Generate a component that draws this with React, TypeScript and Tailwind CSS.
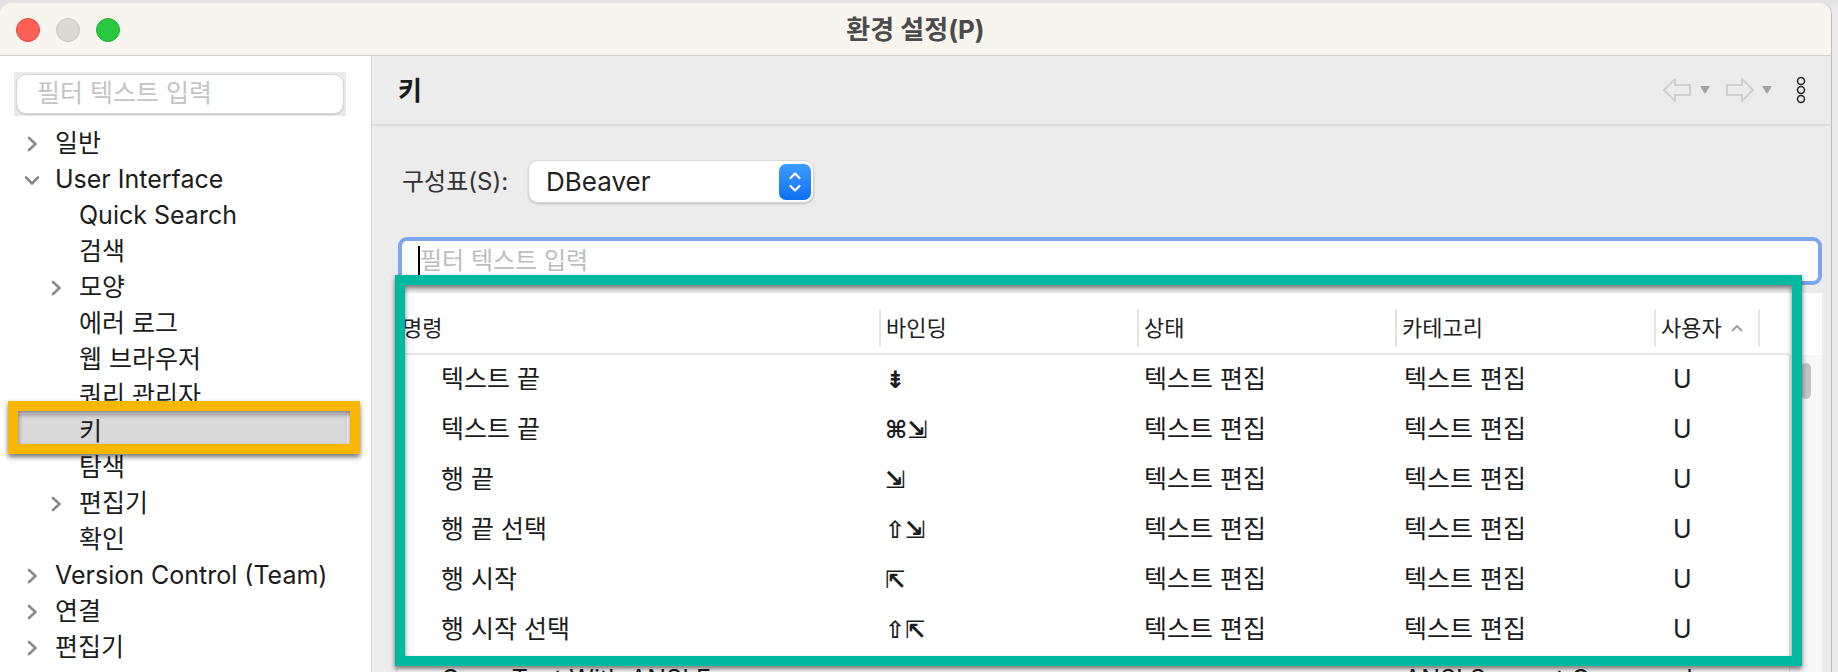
type TreeItem = { label: string; level: number; chev?: 'right' | 'down'; selected?: boolean };

const tree: TreeItem[] = [
  { label: '일반', level: 0, chev: 'right' },
  { label: 'User Interface', level: 0, chev: 'down' },
  { label: 'Quick Search', level: 1 },
  { label: '검색', level: 1 },
  { label: '모양', level: 1, chev: 'right' },
  { label: '에러 로그', level: 1 },
  { label: '웹 브라우저', level: 1 },
  { label: '쿼리 관리자', level: 1 },
  { label: '키', level: 1, selected: true },
  { label: '탐색', level: 1 },
  { label: '편집기', level: 1, chev: 'right' },
  { label: '확인', level: 1 },
  { label: 'Version Control (Team)', level: 0, chev: 'right' },
  { label: '연결', level: 0, chev: 'right' },
  { label: '편집기', level: 0, chev: 'right' },
];

const rows = [
  { cmd: '텍스트 끝', key: '⇟', when: '텍스트 편집', cat: '텍스트 편집', user: 'U' },
  { cmd: '텍스트 끝', key: '⌘⇲', when: '텍스트 편집', cat: '텍스트 편집', user: 'U' },
  { cmd: '행 끝', key: '⇲', when: '텍스트 편집', cat: '텍스트 편집', user: 'U' },
  { cmd: '행 끝 선택', key: '⇧⇲', when: '텍스트 편집', cat: '텍스트 편집', user: 'U' },
  { cmd: '행 시작', key: '⇱', when: '텍스트 편집', cat: '텍스트 편집', user: 'U' },
  { cmd: '행 시작 선택', key: '⇧⇱', when: '텍스트 편집', cat: '텍스트 편집', user: 'U' },
  { cmd: 'Open Text With ANSI Escapes', key: '', when: '', cat: 'ANSI Support Commands', user: '' },
];

function HollowArrow({ dir }: { dir: 'left' | 'right' }) {
  return (
    <svg width="30" height="26" viewBox="0 0 30 26" className={dir === 'right' ? '-scale-x-100' : ''}>
      <path d="M2 13 L13 2 L13 8 L28 8 L28 18 L13 18 L13 24 Z" fill="none" stroke="#cfcfcf" strokeWidth="2" strokeLinejoin="round" />
    </svg>
  );
}

function SmallTriangle() {
  return (
    <svg width="10" height="8" viewBox="0 0 10 8">
      <path d="M0 0 L10 0 L5 8 Z" fill="#a3a3a3" />
    </svg>
  );
}

function Chevron({ dir }: { dir: 'right' | 'down' }) {
  if (dir === 'right') {
    return (
      <svg width="11" height="16" viewBox="0 0 11 16">
        <path d="M2 2 L8.5 8 L2 14" fill="none" stroke="#8a8a8a" strokeWidth="2.6" strokeLinecap="round" strokeLinejoin="round" />
      </svg>
    );
  }
  return (
    <svg width="16" height="11" viewBox="0 0 16 11">
      <path d="M2 2.5 L8 8.5 L14 2.5" fill="none" stroke="#8a8a8a" strokeWidth="2.6" strokeLinecap="round" strokeLinejoin="round" />
    </svg>
  );
}

export default function App() {
  return (
    <div className="relative w-[1838px] h-[672px] overflow-hidden bg-[#e4e4e4] font-[Inter,'Noto_Sans_CJK_KR',sans-serif] text-[#1c1c1c]">
      <div className="flex h-full pt-[3px]">
        {/* window */}
        <div className="flex flex-col w-[1832px] h-full rounded-t-[12px] border-r border-[#bdbdbd] overflow-hidden bg-white">
          <div className="relative flex items-center justify-center h-[53px] shrink-0 bg-[#f8f4ee] border-b border-[#d3d0cb]">
            <div className="absolute left-[16px] top-[15px] flex gap-[16px]">
              <span className="w-[24px] h-[24px] rounded-full bg-[#fe5f57] border border-[#e1463f]" />
              <span className="w-[24px] h-[24px] rounded-full bg-[#dcd8d2] border border-[#c8c4be]" />
              <span className="w-[24px] h-[24px] rounded-full bg-[#28c840] border border-[#1fae33]" />
            </div>
            <span className="text-[26px] font-bold text-[#4b4b4b]">환경 설정(P)</span>
          </div>

          <div className="flex flex-1 min-h-0">
            {/* sidebar */}
            <div className="w-[372px] shrink-0 bg-white border-r border-[#d4d4d4]">
              <div className="ml-[14px] mt-[16px] w-[332px] bg-[#e9e9e9] p-[2px]">
                <div className="h-[40px] flex items-center pl-[20px] rounded-[10px] bg-white border border-[#d4d4d4] shadow-[0_1px_1px_rgba(0,0,0,0.15)] text-[25px] text-[#c4c4c4]">
                  필터 텍스트 입력
                </div>
              </div>
              <div className="mt-[10px]">
                {tree.map((t, i) => (
                  <div
                    key={i}
                    className={`flex items-center h-[36px] ml-[14px] mr-[24px] text-[25px] ${t.selected ? 'bg-[#dadada]' : ''}`}
                    style={{ paddingLeft: 8 + t.level * 24 }}
                  >
                    <span className="w-[20px] flex justify-center">
                      {t.chev && <Chevron dir={t.chev} />}
                    </span>
                    <span className="ml-[13px] whitespace-nowrap">{t.label}</span>
                  </div>
                ))}
              </div>
            </div>

            {/* right panel */}
            <div className="flex-1 flex flex-col bg-[#ececec] min-w-0">
              <div className="flex items-center h-[70px] shrink-0 pl-[26px] pr-[24px] border-b-2 border-[#dcdcdc]">
                <span className="text-[26px] font-bold text-[#1a1a1a]">키</span>
                <div className="ml-auto flex items-center">
                  <HollowArrow dir="left" />
                  <span className="ml-[8px]"><SmallTriangle /></span>
                  <span className="ml-[15px]"><HollowArrow dir="right" /></span>
                  <span className="ml-[7px]"><SmallTriangle /></span>
                  <svg width="12" height="28" viewBox="0 0 12 28" className="ml-[23px]">
                    <circle cx="6" cy="5" r="3.5" fill="none" stroke="#222" strokeWidth="1.5" />
                    <circle cx="6" cy="14" r="3.5" fill="none" stroke="#222" strokeWidth="1.5" />
                    <circle cx="6" cy="23" r="3.5" fill="none" stroke="#222" strokeWidth="1.5" />
                  </svg>
                </div>
              </div>

              <div className="flex flex-col pl-[26px] pr-[9px] min-h-0 flex-1">
                <div className="flex items-center mt-[34px] h-[43px]">
                  <span className="ml-[4px] text-[24px] text-[#333]">구성표(S):</span>
                  <div className="ml-[20px] w-[286px] h-[43px] flex items-center rounded-[10px] bg-white border border-[#d9d9d9] shadow-[0_1px_2px_rgba(0,0,0,0.2)]">
                    <span className="ml-[17px] text-[26px] text-[#222]">DBeaver</span>
                    <div className="ml-auto mr-[2px] w-[32px] h-[36px] rounded-[7px] bg-gradient-to-b from-[#3d9cff] to-[#0a70f0] flex items-center justify-center">
                      <svg width="14" height="24" viewBox="0 0 14 24">
                        <path d="M2.5 8 L7 3.5 L11.5 8" fill="none" stroke="white" strokeWidth="2.2" strokeLinecap="round" strokeLinejoin="round" />
                        <path d="M2.5 16 L7 20.5 L11.5 16" fill="none" stroke="white" strokeWidth="2.2" strokeLinecap="round" strokeLinejoin="round" />
                      </svg>
                    </div>
                  </div>
                </div>

                <div className="mt-[34px] h-[48px] rounded-[9px] border-[4px] border-[#7aa7ee] bg-white flex items-center pl-[16px]">
                  <span className="w-[2px] h-[30px] bg-black" />
                  <span className="text-[24px] text-[#bdbdbd]">필터 텍스트 입력</span>
                </div>

                {/* table */}
                <div className="mt-[8px] flex-1 bg-white flex flex-col min-h-0">
                  <div className="grid grid-cols-[481px_258px_258px_259px_104px_1fr] h-[62px] pt-[10px] items-center text-[22px] text-[#222] border-b-2 border-[#e4e4e4] mr-[33px]">
                    {['명령', '바인딩', '상태', '카테고리', '사용자', ''].map((h, i) => (
                      <div key={i} className={`flex items-center h-[38px] ${i > 0 ? 'border-l-2 border-[#e3e3e3] pl-[5px]' : 'pl-[4px]'}`}>
                        {h}
                        {h === '사용자' && (
                          <svg width="14" height="10" viewBox="0 0 14 10" className="ml-[8px]">
                            <path d="M2 8 L7 3 L12 8" fill="none" stroke="#9a9a9a" strokeWidth="1.8" />
                          </svg>
                        )}
                      </div>
                    ))}
                  </div>
                  <div className="flex flex-1 min-h-0">
                    <div className="flex-1">
                      {rows.map((r, i) => (
                        <div key={i} className="grid grid-cols-[481px_258px_258px_259px_104px_1fr] h-[50px] items-center text-[25px] whitespace-nowrap">
                          <div className="pl-[43px]">{r.cmd}</div>
                          <div className="pl-[6px] font-['DejaVu_Sans',sans-serif] font-bold text-[24px] leading-none">{r.key}</div>
                          <div className="pl-[7px]">{r.when}</div>
                          <div className="pl-[9px]">{r.cat}</div>
                          <div className="pl-[19px]">{r.user}</div>
                          <div />
                        </div>
                      ))}
                    </div>
                    <div className="w-[33px] bg-[#f7f7f7] border-l border-[#e6e6e6] flex justify-center">
                      <div className="mt-[8px] w-[10px] h-[36px] rounded-full bg-[#c4c4c4]" />
                    </div>
                  </div>
                </div>
              </div>
            </div>
          </div>
        </div>
        <div className="flex-1 bg-[#ebebeb]" />
      </div>

      {/* annotation boxes */}
      <div className="absolute left-[8px] top-[401px] w-[352px] h-[53px] border-[10px] border-[#f8b700] shadow-[0_3px_5px_rgba(0,0,0,0.55),inset_0_3px_5px_rgba(0,0,0,0.5)]" />
      <div className="absolute left-[395px] top-[275px] w-[1407px] h-[391px] border-[10px] border-[#01b8a1] shadow-[0_3px_5px_rgba(0,0,0,0.55),inset_0_3px_5px_rgba(0,0,0,0.5)]" />
    </div>
  );
}
